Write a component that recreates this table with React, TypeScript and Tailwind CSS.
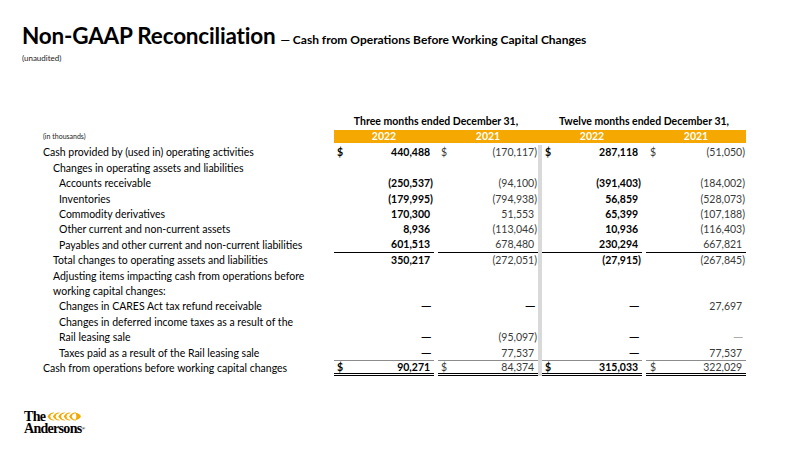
import React from "react";

type Row = {
  label: string;
  indent: 0 | 1 | 2;
  vals?: string[];
  dollar?: boolean;
  under?: boolean;
  total?: boolean;
};

const rows: Row[] = [
  { label: "Cash provided by (used in) operating activities", indent: 0, vals: ["440,488", "(170,117)", "287,118", "(51,050)"], dollar: true },
  { label: "Changes in operating assets and liabilities", indent: 1 },
  { label: "Accounts receivable", indent: 2, vals: ["(250,537)", "(94,100)", "(391,403)", "(184,002)"] },
  { label: "Inventories", indent: 2, vals: ["(179,995)", "(794,938)", "56,859", "(528,073)"] },
  { label: "Commodity derivatives", indent: 2, vals: ["170,300", "51,553", "65,399", "(107,188)"] },
  { label: "Other current and non-current assets", indent: 2, vals: ["8,936", "(113,046)", "10,936", "(116,403)"] },
  { label: "Payables and other current and non-current liabilities", indent: 2, vals: ["601,513", "678,480", "230,294", "667,821"], under: true },
  { label: "Total changes to operating assets and liabilities", indent: 1, vals: ["350,217", "(272,051)", "(27,915)", "(267,845)"] },
  { label: "Adjusting items impacting cash from operations before", indent: 1 },
  { label: "working capital changes:", indent: 1 },
  { label: "Changes in CARES Act tax refund receivable", indent: 2, vals: ["—", "—", "—", "27,697"] },
  { label: "Changes in deferred income taxes as a result of the", indent: 2 },
  { label: "Rail leasing sale", indent: 2, vals: ["—", "(95,097)", "—", "–"] },
  { label: "Taxes paid as a result of the Rail leasing sale", indent: 2, vals: ["—", "77,537", "—", "77,537"] },
  { label: "Cash from operations before working capital changes", indent: 0, vals: ["90,271", "84,374", "315,033", "322,029"], dollar: true, total: true },
];

const indentCls = ["pl-0", "pl-[10px]", "pl-[16px]"];

function ValueCell({ v, bold, dollar, under, total, col }: { v?: string; bold: boolean; dollar?: boolean; under?: boolean; total?: boolean; col: number }) {
  const paren = v ? v.endsWith(")") : false;
  let border = "";
  if (under) border = "border-b border-black";
  if (total) border = "border-t border-t-[#8c8c8c] border-b-[3px] border-double border-b-black";
  let valCls = bold ? "font-bold text-black" : "text-[#3a3a3a]";
  if (v === "–") valCls = "text-[#9a9a9a]";
  if (v === "—") valCls = col === 3 ? "text-[#9a9a9a]" : "font-bold text-black";
  return (
    <div className={`flex items-center justify-between h-full box-border ${col === 3 ? "pl-[4px]" : "pl-[3px]"} pr-[1px] ${border}`}>
      <span className={bold ? "font-bold text-black" : "text-[#3a3a3a]"}>{dollar ? "$" : ""}</span>
      <span className={valCls}>
        {v === "—" || v === "–" ? <span className="inline-block scale-x-[1.3]">—</span> : v}
        {v && !paren ? <span className="invisible">)</span> : null}
      </span>
    </div>
  );
}

function Wheat() {
  const grains = [0, 1, 2, 3, 4];
  return (
    <svg width="34" height="9" viewBox="0 0 34 9" className="block">
      {grains.map((i) => {
        const x = 0.5 + i * 5.4;
        return (
          <path
            key={i}
            d={`M${x} 4.5 Q${x + 2.5} 0 ${x + 7} 0.5 L${x + 5.6} 1.6 Q${x + 3.2} 1.8 ${x + 2.6} 4.5 Q${x + 3.2} 7.2 ${x + 5.6} 7.4 L${x + 7} 8.5 Q${x + 2.5} 9 ${x} 4.5 Z`}
            fill="#F2A900"
          />
        );
      })}
      <path d="M28 0.6 Q33.8 2.2 33.8 4.5 Q33.8 6.8 28 8.4 Q30.8 4.5 28 0.6 Z" fill="#F2A900" />
    </svg>
  );
}

export default function App() {
  const grid = "grid grid-cols-[291px_100px_4px_100px_4px_100px_4px_100px]";
  return (
    <div className="w-[800px] h-[450px] bg-white relative overflow-hidden" style={{ fontFamily: "Lato, 'Open Sans', sans-serif" }}>
      <div className="pl-[22px] pt-[25px]">
        <div className="flex items-baseline text-black">
          <span className="text-[22.5px] font-bold leading-none tracking-[-0.2px]">Non-GAAP Reconciliation</span>
          <span className="text-[12px] font-bold ml-[5px]">— Cash from Operations Before Working Capital Changes</span>
        </div>
        <div className="text-[8px] mt-[3px] text-[#222]">(unaudited)</div>
      </div>

      <div className="pl-[43px] mt-[50px] text-[10.5px] leading-none">
        <div className={`${grid} h-[15px] items-center`}>
          <div />
          <div className="col-span-3 text-center font-bold text-black text-[10.5px]">Three months ended December 31,</div>
          <div />
          <div className="col-span-3 text-center font-bold text-black text-[10.5px]">Twelve months ended December 31,</div>
        </div>
        <div className={`${grid} h-[13px] mt-[1px] items-stretch`}>
          <div className="flex items-center text-[7px] text-[#222]">(in thousands)</div>
          <div className="bg-[#F4A800] flex items-center justify-center text-white font-bold">2022</div>
          <div className="bg-[#F4A800]" />
          <div className="bg-[#F4A800] flex items-center justify-center text-white font-bold">2021</div>
          <div className="bg-[#F4A800]" />
          <div className="bg-[#F4A800] flex items-center justify-center text-white font-bold">2022</div>
          <div className="bg-[#F4A800]" />
          <div className="bg-[#F4A800] flex items-center justify-center text-white font-bold">2021</div>
        </div>
        <div className="pt-[2px]">
          {rows.map((r, i) => (
            <div key={i} className={`${grid} h-[15.4px] items-stretch`}>
              <div className={`flex items-center text-black whitespace-nowrap ${indentCls[r.indent]}`}>{r.label}</div>
              <ValueCell col={0} v={r.vals?.[0]} bold dollar={r.dollar} under={r.under} total={r.total} />
              <div />
              <ValueCell col={1} v={r.vals?.[1]} bold={false} dollar={r.dollar} under={r.under} total={r.total} />
              <div className="bg-[#d9d9d9]" />
              <ValueCell col={2} v={r.vals?.[2]} bold dollar={r.dollar} under={r.under} total={r.total} />
              <div />
              <ValueCell col={3} v={r.vals?.[3]} bold={false} dollar={r.dollar} under={r.under} total={r.total} />
            </div>
          ))}
        </div>
      </div>

      <div className="absolute left-[24px] top-[411px] leading-none text-black" style={{ fontFamily: "'Liberation Serif', serif" }}>
        <div className="flex items-center h-[11px]">
          <span className="text-[14px] font-bold tracking-[-0.7px] leading-[11px]">The</span>
          <span className="ml-[2px]"><Wheat /></span>
        </div>
        <div className="text-[14px] font-bold tracking-[-0.7px] leading-[11px] mt-[1px]">
          Andersons<span className="text-[5px] align-top tracking-normal">®</span>
        </div>
      </div>
    </div>
  );
}
